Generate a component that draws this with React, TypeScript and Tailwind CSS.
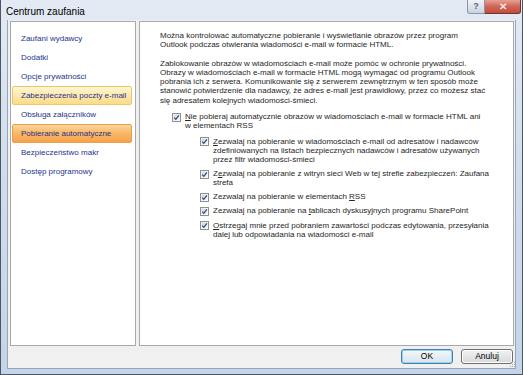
import React from "react";

const navItems = [
  { label: "Zaufani wydawcy" },
  { label: "Dodatki" },
  { label: "Opcje prywatności" },
  { label: "Zabezpieczenia poczty e-mail", state: "hover" },
  { label: "Obsługa załączników" },
  { label: "Pobieranie automatyczne", state: "active" },
  { label: "Bezpieczeństwo makr" },
  { label: "Dostęp programowy" },
];

function Check() {
  return (
    <svg width="9" height="9" viewBox="0 0 9 9" className="shrink-0 mt-[0.5px]">
      <defs>
        <linearGradient id="cbg" x1="0" y1="0" x2="1" y2="1">
          <stop offset="0" stopColor="#cfd6e0" />
          <stop offset="1" stopColor="#f4f6f9" />
        </linearGradient>
      </defs>
      <rect x="0.5" y="0.5" width="8" height="8" fill="#fff" stroke="#8e8f8f" />
      <rect x="1.5" y="1.5" width="6" height="6" fill="url(#cbg)" />
      <path d="M2.2 4.6 L3.8 6.3 L6.9 2.3" fill="none" stroke="#2f4677" strokeWidth="1.2" />
    </svg>
  );
}

function CheckRow({ children, className = "" }: { children: React.ReactNode; className?: string }) {
  return (
    <div className={"flex items-start gap-[4px] " + className}>
      <Check />
      <div className="whitespace-nowrap">{children}</div>
    </div>
  );
}

export default function App() {
  return (
    <div className="w-[523px] h-[375px] flex flex-col bg-gradient-to-b from-[#e3eaf3] via-[#cfdcec] to-[#c4d5e9] border-x border-b border-[#4c5663] font-['Liberation_Sans_Narrow','Liberation_Sans',sans-serif] text-[8px] text-[#262626] overflow-hidden">
      {/* title bar */}
      <div className="h-[20px] flex justify-between shrink-0">
        <span className="pl-[5px] pt-[4px] text-[10px] text-black font-['Liberation_Sans',sans-serif]">Centrum zaufania</span>
        <div className="flex items-start mr-[1px]">
          <div className="w-[18px] h-[14px] flex items-center justify-center border border-[#8796a8] border-t-0 rounded-bl-[3px] bg-gradient-to-b from-[#f1f4f8] to-[#c9d3df] text-[9px] text-[#5b6574] font-bold">?</div>
          <div className="w-[36px] h-[14px] flex items-center justify-center border border-[#6e3631] border-t-0 border-l-0 rounded-br-[3px] bg-gradient-to-b from-[#e6a096] via-[#cf6656] to-[#c44a3c] text-[10px] text-[#f3e6e4] font-bold">✕</div>
        </div>
      </div>

      {/* client area */}
      <div className="flex-1 mx-[6px] mb-[5px] bg-[#f0f0f0] border-x border-b border-[#97a6b8] flex flex-col pl-[2px] pr-[1px] pt-[1px]">
        <div className="flex-1 flex gap-[3px]">
          {/* left nav */}
          <div className="w-[126px] bg-white border border-[#a9a9a9] pt-[7px] px-[1px]">
            {navItems.map((item) => (
              <div
                key={item.label}
                className={
                  "h-[19px] flex items-center pl-[8px] mr-[2px] text-[8px] text-[#26348c] whitespace-nowrap border " +
                  (item.state === "hover"
                    ? "bg-gradient-to-b from-[#fff6d2] to-[#fbdb85] border-[#eac56a] rounded-[2px]"
                    : item.state === "active"
                    ? "bg-gradient-to-b from-[#fcd59c] via-[#f9b766] to-[#f6a24a] border-[#e9a04d] rounded-[2px]"
                    : "border-transparent")
                }
              >
                {item.label}
              </div>
            ))}
          </div>

          {/* right content */}
          <div className="flex-1 bg-white border border-[#a9a9a9] pl-[20px] pt-[9px] leading-[9.3px] whitespace-nowrap">
            <p>
              Można kontrolować automatyczne pobieranie i wyświetlanie obrazów przez program
              <br />
              Outlook podczas otwierania wiadomości e-mail w formacie HTML.
            </p>
            <p className="mt-[9px]">
              Zablokowanie obrazów w wiadomościach e-mail może pomóc w ochronie prywatności.
              <br />
              Obrazy w wiadomościach e-mail w formacie HTML mogą wymagać od programu Outlook
              <br />
              pobrania ich z serwera. Komunikowanie się z serwerem zewnętrznym w ten sposób może
              <br />
              stanowić potwierdzenie dla nadawcy, że adres e-mail jest prawidłowy, przez co możesz stać
              <br />
              się adresatem kolejnych wiadomości-śmieci.
            </p>

            <CheckRow className="mt-[7px] ml-[12px]">
              <u>N</u>ie pobieraj automatycznie obrazów w wiadomościach e-mail w formacie HTML ani
              <br />
              w elementach RSS
            </CheckRow>

            <div className="ml-[40px] mt-[6px] flex flex-col gap-[4.6px]">
              <CheckRow>
                <u>Z</u>ezwalaj na pobieranie w wiadomościach e-mail od adresatów i nadawców
                <br />
                zdefiniowanych na listach bezpiecznych nadawców i adresatów używanych
                <br />
                przez filtr wiadomości-śmieci
              </CheckRow>
              <CheckRow>
                Z<u>e</u>zwalaj na pobieranie z witryn sieci Web w tej strefie zabezpieczeń: Zaufana
                <br />
                strefa
              </CheckRow>
              <CheckRow>
                Zezwalaj na pobieranie w elementach <u>R</u>SS
              </CheckRow>
              <CheckRow>
                Zezwalaj na pobieranie na <u>t</u>ablicach dyskusyjnych programu SharePoint
              </CheckRow>
              <CheckRow>
                <u>O</u>strzegaj mnie przed pobraniem zawartości podczas edytowania, przesyłania
                <br />
                dalej lub odpowiadania na wiadomości e-mail
              </CheckRow>
            </div>
          </div>
        </div>

        {/* buttons */}
        <div className="h-[15px] mt-[3px] mb-[4px] flex justify-end gap-[8px] pr-[1px] relative">
          <button className="w-[52px] h-[15px] rounded-[3px] border border-[#3c7fb1] bg-gradient-to-b from-[#f4f8fb] to-[#d8e4ee] text-[8.5px] text-black shadow-[inset_0_0_0_1px_#9fd2f0] flex items-center justify-center">
            OK
          </button>
          <button className="w-[52px] h-[15px] rounded-[3px] border border-[#707070] bg-gradient-to-b from-[#f2f2f2] to-[#d9d9d9] text-[8.5px] text-black shadow-[inset_0_0_0_1px_#fcfcfc] flex items-center justify-center">
            Anuluj
          </button>
          <svg width="6" height="6" viewBox="0 0 6 6" className="absolute right-[-2px] bottom-[-4px]">
            <rect x="4" y="0" width="1" height="1" fill="#a6a6a6" />
            <rect x="2" y="2" width="1" height="1" fill="#a6a6a6" />
            <rect x="4" y="2" width="1" height="1" fill="#a6a6a6" />
            <rect x="0" y="4" width="1" height="1" fill="#a6a6a6" />
            <rect x="2" y="4" width="1" height="1" fill="#a6a6a6" />
            <rect x="4" y="4" width="1" height="1" fill="#a6a6a6" />
          </svg>
        </div>
      </div>
    </div>
  );
}
